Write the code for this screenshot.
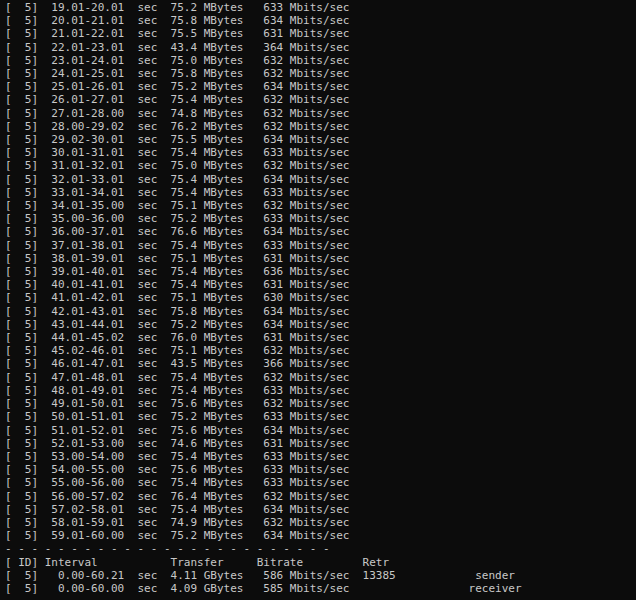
const rows: [string, string, string][] = [
  ["19.01-20.01", "75.2", "633"],
  ["20.01-21.01", "75.8", "634"],
  ["21.01-22.01", "75.5", "631"],
  ["22.01-23.01", "43.4", "364"],
  ["23.01-24.01", "75.0", "632"],
  ["24.01-25.01", "75.8", "632"],
  ["25.01-26.01", "75.2", "634"],
  ["26.01-27.01", "75.4", "632"],
  ["27.01-28.00", "74.8", "632"],
  ["28.00-29.02", "76.2", "632"],
  ["29.02-30.01", "75.5", "634"],
  ["30.01-31.01", "75.4", "633"],
  ["31.01-32.01", "75.0", "632"],
  ["32.01-33.01", "75.4", "634"],
  ["33.01-34.01", "75.4", "633"],
  ["34.01-35.00", "75.1", "632"],
  ["35.00-36.00", "75.2", "633"],
  ["36.00-37.01", "76.6", "634"],
  ["37.01-38.01", "75.4", "633"],
  ["38.01-39.01", "75.1", "631"],
  ["39.01-40.01", "75.4", "636"],
  ["40.01-41.01", "75.4", "631"],
  ["41.01-42.01", "75.1", "630"],
  ["42.01-43.01", "75.8", "634"],
  ["43.01-44.01", "75.2", "634"],
  ["44.01-45.02", "76.0", "631"],
  ["45.02-46.01", "75.1", "632"],
  ["46.01-47.01", "43.5", "366"],
  ["47.01-48.01", "75.4", "632"],
  ["48.01-49.01", "75.4", "633"],
  ["49.01-50.01", "75.6", "632"],
  ["50.01-51.01", "75.2", "633"],
  ["51.01-52.01", "75.6", "634"],
  ["52.01-53.00", "74.6", "631"],
  ["53.00-54.00", "75.4", "633"],
  ["54.00-55.00", "75.6", "633"],
  ["55.00-56.00", "75.4", "633"],
  ["56.00-57.02", "76.4", "632"],
  ["57.02-58.01", "75.4", "634"],
  ["58.01-59.01", "74.9", "632"],
  ["59.01-60.00", "75.2", "634"],
];

// summary lines: sender starts at column 71, receiver at column 70
const sender = "[  5]   0.00-60.21  sec  4.11 GBytes   586 Mbits/sec  13385".padEnd(71) + "sender";
const receiver = "[  5]   0.00-60.00  sec  4.09 GBytes   585 Mbits/sec".padEnd(70) + "receiver";

const lines = [
  ...rows.map(([t, mb, bit]) => `[  5]  ${t}  sec  ${mb} MBytes   ${bit} Mbits/sec`),
  Array(25).fill("-").join(" "),
  "[ ID] Interval           Transfer     Bitrate         Retr",
  sender,
  receiver,
];

export default function App() {
  return (
    <div className="w-[636px] h-[600px] overflow-hidden bg-[#0c0c0c] pt-px pl-[5px]">
      <pre className="font-['DejaVu_Sans_Mono',monospace] text-[11px] leading-[13.2px] text-[#c8c8c8]">
        {lines.join("\n")}
      </pre>
    </div>
  );
}
